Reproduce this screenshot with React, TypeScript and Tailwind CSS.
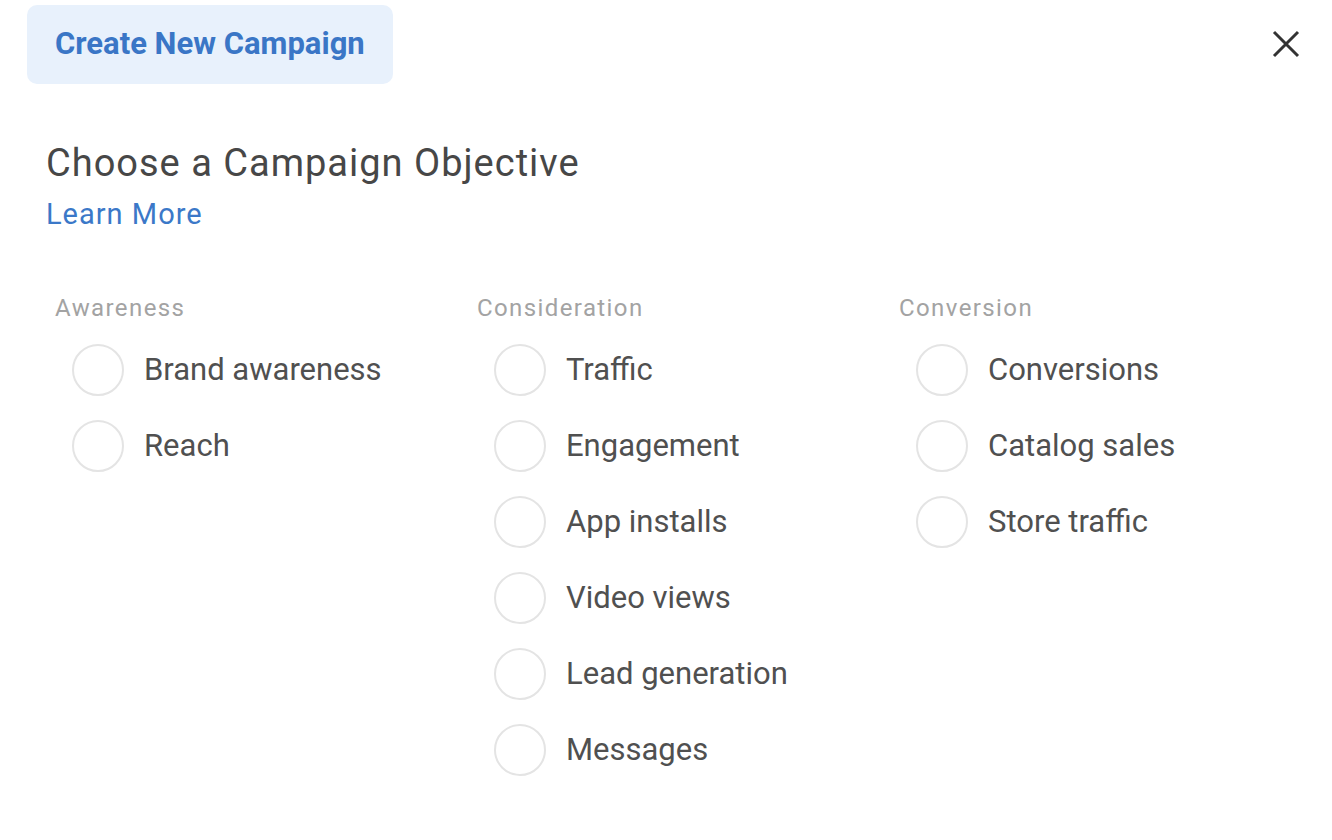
const columns = [
  { title: 'Awareness', items: ['Brand awareness', 'Reach'] },
  {
    title: 'Consideration',
    items: ['Traffic', 'Engagement', 'App installs', 'Video views', 'Lead generation', 'Messages'],
  },
  { title: 'Conversion', items: ['Conversions', 'Catalog sales', 'Store traffic'] },
];

export default function App() {
  return (
    <div className="w-[1332px] h-[840px] bg-white font-['Roboto',sans-serif] overflow-hidden">
      <div className="flex items-start justify-between pl-[27px] pr-[32px] pt-[5px]">
        <div className="h-[79px] w-[366px] rounded-[10px] bg-[#e8f1fc] flex items-center pl-[28px]">
          <span className="text-[31px] font-bold text-[#3a76c6]">Create New Campaign</span>
        </div>
        <button className="mt-[25px] text-[#333]">
          <svg width="28" height="28" viewBox="0 0 28 28" fill="none" stroke="currentColor" strokeWidth="3">
            <path d="M2 2 26 26M26 2 2 26" />
          </svg>
        </button>
      </div>

      <div className="pl-[46px] mt-[57px]">
        <h1 className="text-[38px] leading-[44px] tracking-[1px] text-[#474747]">
          Choose a Campaign Objective
        </h1>
        <a className="mt-[11px] block text-[29px] leading-[36px] tracking-[1px] text-[#3b78c8]">
          Learn More
        </a>
      </div>

      <div className="grid grid-cols-[422px_422px_422px] pl-[55px] mt-[61px]">
        {columns.map((col) => (
          <div key={col.title}>
            <p className="text-[24px] leading-[30px] tracking-[1.4px] text-[#a3a3a3]">{col.title}</p>
            <div className="mt-[21px] flex flex-col gap-[24px] pl-[17px]">
              {col.items.map((item) => (
                <label key={item} className="flex items-center gap-[20px]">
                  <span className="h-[52px] w-[52px] rounded-full border-2 border-[#e4e4e4]" />
                  <span className="text-[31px] text-[#505050]">{item}</span>
                </label>
              ))}
            </div>
          </div>
        ))}
      </div>
    </div>
  );
}
